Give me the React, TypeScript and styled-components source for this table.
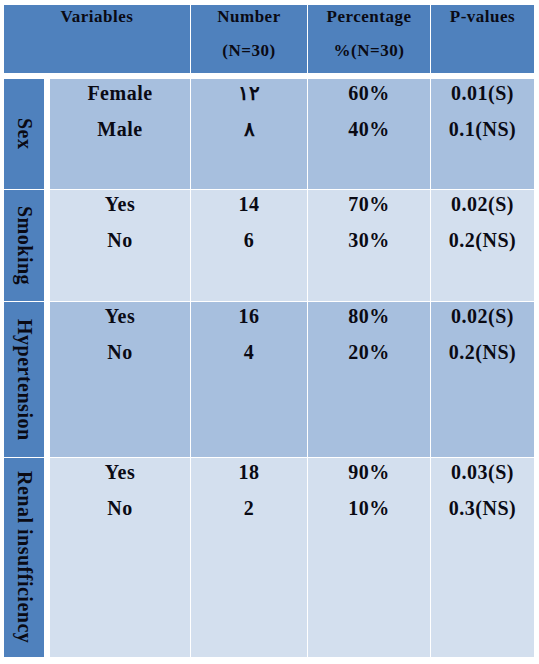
import styled, { createGlobalStyle } from 'styled-components'

const GlobalStyle = createGlobalStyle`
  body {
    margin: 0;
    background: #ffffff;
    font-family: 'Liberation Serif', 'DejaVu Serif', serif;
  }
`

const DARK = '#4f81bd'
const MID = '#a7bfde'
const LIGHT = '#d3dfee'

const Sheet = styled.div`
  padding: 5px 0 0 4px;
  width: 530px;
  font-family: 'Liberation Serif', 'DejaVu Serif', serif;
  font-weight: bold;
  color: #0a0a14;
  display: flex;
  flex-direction: column;
`

const HeadRow = styled.div`
  display: flex;
  gap: 1px;
  height: 68px;
  margin-bottom: 6px;
`

const HeadCell = styled.div<{ $w: number }>`
  width: ${p => p.$w}px;
  background: ${DARK};
  display: flex;
  flex-direction: column;
  align-items: center;
  gap: 12px;
  padding-top: 1px;
  font-size: 17px;
  line-height: 22px;
  letter-spacing: 0.5px;
  box-sizing: border-box;
`

const Groups = styled.div`
  display: flex;
  flex-direction: column;
  gap: 1px;
`

const Group = styled.div<{ $h: number }>`
  display: flex;
  height: ${p => p.$h}px;
`

const SideLabel = styled.div`
  width: 40px;
  margin-right: 6px;
  background: ${DARK};
  display: flex;
  align-items: center;
  justify-content: center;
  writing-mode: vertical-rl;
  font-size: 20px;
  letter-spacing: 0.5px;
  white-space: nowrap;
`

const Cells = styled.div`
  display: flex;
  gap: 1px;
`

const Cell = styled.div<{ $w: number; $shade: string }>`
  width: ${p => p.$w}px;
  background: ${p => p.$shade};
  display: flex;
  flex-direction: column;
  align-items: center;
  gap: 8px;
  font-size: 20px;
  line-height: 28px;
  letter-spacing: 0.5px;
`

const widths = [140, 116, 122, 103]

const groups = [
  {
    label: 'Sex',
    h: 110,
    shade: MID,
    rows: [
      ['Female', '١٢', '60%', '0.01(S)'],
      ['Male', '٨', '40%', '0.1(NS)'],
    ],
  },
  {
    label: 'Smoking',
    h: 111,
    shade: LIGHT,
    rows: [
      ['Yes', '14', '70%', '0.02(S)'],
      ['No', '6', '30%', '0.2(NS)'],
    ],
  },
  {
    label: 'Hypertension',
    h: 155,
    shade: MID,
    rows: [
      ['Yes', '16', '80%', '0.02(S)'],
      ['No', '4', '20%', '0.2(NS)'],
    ],
  },
  {
    label: 'Renal insufficiency',
    h: 199,
    shade: LIGHT,
    rows: [
      ['Yes', '18', '90%', '0.03(S)'],
      ['No', '2', '10%', '0.3(NS)'],
    ],
  },
]

const App = () => {
  return (
    <>
      <GlobalStyle />
      <Sheet>
        <HeadRow>
          <HeadCell $w={186}><span>Variables</span></HeadCell>
          <HeadCell $w={116}><span>Number</span><span>(N=30)</span></HeadCell>
          <HeadCell $w={122}><span>Percentage</span><span>%(N=30)</span></HeadCell>
          <HeadCell $w={103}><span>P-values</span></HeadCell>
        </HeadRow>
        <Groups>
          {groups.map(g => (
            <Group key={g.label} $h={g.h}>
              <SideLabel>{g.label}</SideLabel>
              <Cells>
                {widths.map((w, col) => (
                  <Cell key={col} $w={w} $shade={g.shade}>
                    {g.rows.map(r => <span key={r[col]}>{r[col]}</span>)}
                  </Cell>
                ))}
              </Cells>
            </Group>
          ))}
        </Groups>
      </Sheet>
    </>
  )
}

export default App
